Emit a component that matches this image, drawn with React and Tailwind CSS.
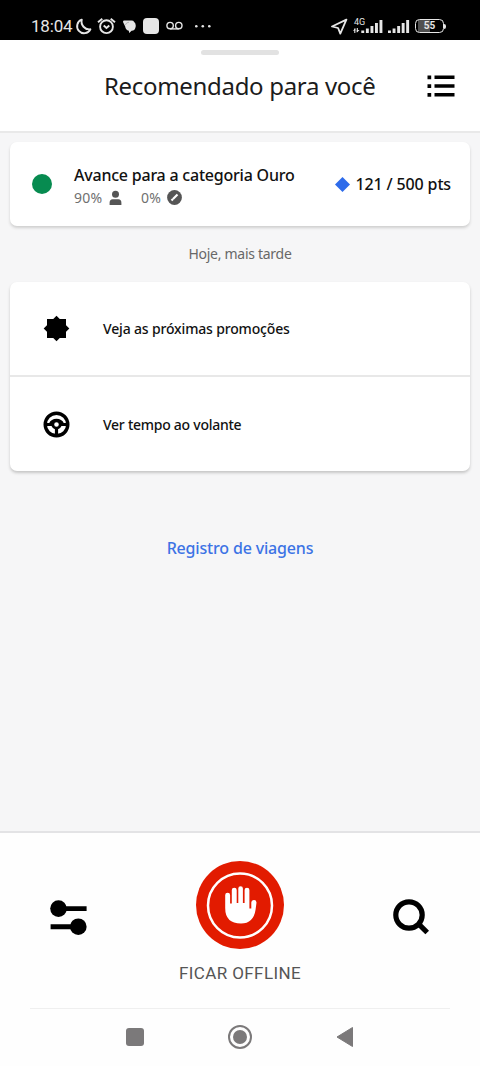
import React from "react";

function StatusBar() {
  return (
    <header className="flex h-[40px] shrink-0 items-start justify-between bg-black pl-[31px] pr-[34px] pt-[14px] text-[#e6e6e6]">
      <div className="flex h-6 items-center">
        <span className="w-[44px] whitespace-nowrap font-['Roboto',sans-serif] text-[17px] leading-6 tracking-[-0.2px]">18:04</span>
        <svg className="h-6 w-[17px]" viewBox="75 14 17 24" fill="none" stroke="currentColor" strokeWidth="1.9" strokeLinejoin="round">
          <path d="M81.8 19.6 A7 7 0 1 0 90.4 29.3 A7.8 7.8 0 0 1 81.8 19.6Z" />
        </svg>
        <svg className="ml-[5px] h-6 w-[19px]" viewBox="97 14 19 24" fill="none" stroke="currentColor" strokeWidth="1.9">
          <circle cx="106.500" cy="26.700" r="6.400" />
          <path d="M98 22.300 L102.300 18.700 M115 22.300 L110.700 18.700" />
          <path d="M103.700 25.500 L106.500 28 L109.300 25.500" />
        </svg>
        <svg className="ml-[7px] h-6 w-[14px]" viewBox="123 14 14 24" fill="currentColor">
          <path d="M124.200 20.600H131.500Q133.500 20.600 134.200 22Q136 23.300 135.700 26.400Q135.200 30.500 131.600 30.700L129.200 33L128.800 30.700Q125.500 30.200 125.200 26.600L123 22Q122.900 20.600 124.200 20.600Z" />
          <path d="M125.300 25Q126.200 22.300 129 22.200" stroke="#888" strokeWidth=".5" fill="none" />
        </svg>
        <span className="ml-[6px] size-4 rounded-[4px] bg-current" />
        <svg className="ml-[7px] h-6 w-[17px]" viewBox="165.500 14 17 24" fill="none" stroke="currentColor" strokeWidth="1.400">
          <circle cx="169.600" cy="25.600" r="3.200" />
          <circle cx="178.300" cy="25.600" r="3.200" />
          <path d="M169.600 28.900 H178.300" />
        </svg>
        <svg className="ml-[11px] h-6 w-[18px]" viewBox="193.500 14 18 24" fill="currentColor">
          <circle cx="195.800" cy="26.300" r="1.300" />
          <circle cx="202.300" cy="26.300" r="1.300" />
          <circle cx="208.800" cy="26.300" r="1.300" />
        </svg>
      </div>
      <div className="flex h-6 items-center">
        <svg className="h-6 w-[17px]" viewBox="331 14 17 24" fill="none" stroke="currentColor" strokeWidth="1.800" strokeLinejoin="round">
          <path d="M346.400 19.600 L332 26.500 L338.100 28 L340.300 33.600Z" />
        </svg>
        <div className="relative ml-[5px] h-6 w-[31px]">
          <span className="absolute left-[1px] top-[3px] font-['Roboto',sans-serif] text-[9px] leading-[10px]">4G</span>
          <svg className="h-6 w-[31px]" viewBox="353.500 14 31 24" fill="currentColor">
            <path d="M355.300 28.500V33M357.800 28V32" stroke="currentColor" strokeWidth="1.100" />
            <path d="M353.500 30.700L355.800 28.200V30.700ZM357.300 30H360L357.300 32.700Z" />
            <rect x="361.800" y="30.500" width="2.900" height="2.500" />
            <rect x="366.400" y="28.500" width="2.900" height="4.500" />
            <rect x="371" y="26" width="2.900" height="7" />
            <rect x="375.500" y="23" width="2.900" height="10" />
            <rect x="380" y="20" width="2.900" height="13" />
          </svg>
        </div>
        <svg className="ml-[4px] h-6 w-[22px]" viewBox="388.500 14 22 24" fill="currentColor">
          <rect x="388.500" y="30.500" width="2.900" height="2.500" />
          <rect x="393.100" y="28.500" width="2.900" height="4.500" />
          <rect x="397.700" y="26" width="2.900" height="7" />
          <rect x="402.200" y="23" width="2.900" height="10" />
          <rect x="406.700" y="20" width="2.900" height="13" />
        </svg>
        <div className="ml-[5px] flex items-center">
          <div className="flex h-[14px] w-[29px] items-center justify-center rounded-[4.500px] border-[1.500px] border-current bg-[linear-gradient(90deg,#000_2px,#505050_2px,#505050_14px,#000_14px)] font-['Roboto',sans-serif] text-[10px] font-bold leading-none">55</div>
          <span className="h-[5px] w-[2px] rounded-r-sm bg-current" />
        </div>
      </div>
    </header>
  );
}

function Heading() {
  return (
    <section className="flex h-[93px] shrink-0 flex-col border-b-2 border-[#e9e9e9] bg-white">
      <div className="mx-auto mt-[10px] h-[5px] w-[78px] rounded-full bg-[#e2e2e2]" />
      <div className="flex h-[61px] items-center pl-[104px] pr-[25px]">
        <h1 className="w-[300px] whitespace-nowrap font-['Noto_Sans',sans-serif] text-[24px] font-normal leading-8 tracking-[-0.32px] text-[#1c1c1c]">Recomendado para você</h1>
        <svg className="ml-auto h-[22px] w-[28px]" viewBox="427 74 28 22" fill="#000">
          <path d="M427.500 74.500h3.700v3.700h-3.700zM427.500 83.200h3.700v3.700h-3.700zM427.500 92h3.700v3.700h-3.700zM434.500 74.500h20v3.500h-20zM434.500 83.300h20v3.500h-20zM434.500 92.100h20v3.500h-20z" />
        </svg>
      </div>
    </section>
  );
}

function TierCard() {
  return (
    <article className="flex h-[84px] items-center rounded-[7px] bg-white pl-[22px] pr-[19px] shadow-[0_2px_3px_#cfcfcf]">
      <span className="size-[20px] rounded-full bg-[#078b50]" />
      <div className="ml-[22px] flex flex-col pt-[4px]">
        <h2 className="whitespace-nowrap text-[16px] font-medium leading-6 tracking-[-0.22px] text-[#111]">Avance para a categoria Ouro</h2>
        <div className="-mt-px flex h-6 items-center text-[14px] text-[#707070]">
          <span className="w-[35px] tracking-[0.3px]">90%</span>
          <svg className="h-[16px] w-[13px]" viewBox="109 190 13 16" fill="#555">
            <circle cx="115.500" cy="194.300" r="3.500" />
            <path d="M109.600 205V203Q109.600 199.300 112.700 199.300H118.300Q121.400 199.300 121.400 203V205Z" />
          </svg>
          <span className="ml-[19px] w-[26px] tracking-[0.3px]">0%</span>
          <svg className="size-[15px]" viewBox="0 0 15 15">
            <circle cx="7.500" cy="7.500" r="7.400" fill="#555" />
            <path d="M4.500 10.500L10.500 4.500" stroke="#fff" strokeWidth="2.200" />
            <path d="M5.500 8.500L6.500 9.500" stroke="#777" strokeWidth=".6" />
          </svg>
        </div>
      </div>
      <div className="ml-auto flex items-center">
        <svg className="mr-[6px] size-[15px]" viewBox="0 0 15 15"><path d="M7.500 0L15 7.500L7.500 15L0 7.500Z" fill="#2e6bea" /></svg>
        <span className="whitespace-nowrap text-[16px] font-medium leading-6 tracking-[-0.15px] text-[#111]">121 / 500 pts</span>
      </div>
    </article>
  );
}

function ActionList() {
  return (
    <article className="flex flex-col rounded-[7px] bg-white shadow-[0_2px_3px_#c6c6c6]">
      <button className="flex h-[95px] items-center border-b-2 border-[#e8e8e8] pl-[33px] text-left">
        <svg className="size-[27px]" viewBox="0 0 27 27" fill="#000">
          <path d="M4 4H23V23H4Z" />
          <path d="M13.500 .7L26.300 13.500L13.500 26.300L.7 13.500Z" />
        </svg>
        <span className="ml-[33px] whitespace-nowrap text-[14px] font-medium tracking-[-0.16px] text-[#111]">Veja as próximas promoções</span>
      </button>
      <button className="flex h-[94px] items-center pl-[33px] text-left">
        <svg className="size-[27px]" viewBox="0 0 27 27" fill="none" stroke="#000">
          <circle cx="13.500" cy="13.500" r="11.300" strokeWidth="3.400" />
          <circle cx="13.500" cy="13.500" r="3.700" strokeWidth="2.800" />
          <path d="M3 13.500H9.500M17.500 13.500H24M13.500 17.500V24" strokeWidth="3.200" />
          <path d="M7 13Q9 9 13.500 9Q18 9 20 13" strokeWidth="2.300" />
        </svg>
        <span className="ml-[33px] whitespace-nowrap text-[14px] font-medium tracking-[-0.26px] text-[#111]">Ver tempo ao volante</span>
      </button>
    </article>
  );
}

function OfflineButton() {
  return (
    <button className="flex flex-col items-center">
      <svg className="size-[88px]" viewBox="196 861 88 88">
        <circle cx="240" cy="905" r="44" fill="#e21b00" />
        <circle cx="240" cy="905.500" r="32" fill="none" stroke="#fff" strokeWidth="2.500" />
        <path fill="#fff" d="M225.200 895.100A2.450 2.450 0 0 1 230.100 895.100V903.500H231.800V890.100A2.450 2.450 0 0 1 236.700 890.100V903H238.300V888.600A2.300 2.300 0 0 1 242.900 888.600V903H244.600V890.100A2.400 2.400 0 0 1 249.400 890.100V908.500H251.300V902.800A2.600 2.600 0 0 1 256.500 902.400L255.600 909.500Q253.500 923.500 241 923.500Q225.200 923.500 225.200 908Z" />
      </svg>
      <span className="mt-[12px] whitespace-nowrap font-['Roboto',sans-serif] text-[17px] leading-6 tracking-[0.4px] text-[#555]">FICAR OFFLINE</span>
    </button>
  );
}

function BottomPanel() {
  return (
    <footer className="flex h-[235px] flex-col border-t-2 border-[#e3e3e5] bg-[#fefefe]">
      <div className="grid h-[175px] grid-cols-3 justify-items-center pt-[28px]">
        <svg className="mr-[23px] mt-[38px] h-[37px] w-[38px]" viewBox="50 899 38 37" fill="#000">
          <circle cx="58.500" cy="908.600" r="8.300" />
          <circle cx="78.300" cy="926.700" r="8.300" />
          <path d="M60 906.200H86.600V911H60ZM50.600 924.200H77V929.200H50.600Z" />
        </svg>
        <OfflineButton />
        <svg className="ml-[21px] mt-[38px] h-[37px] w-[38px]" viewBox="392 899 38 37" fill="none" stroke="#000" strokeWidth="5.200">
          <circle cx="409" cy="915" r="13.200" />
          <path d="M418 923.300L427.200 932.500" />
        </svg>
      </div>
      <nav className="mx-[30px] flex h-[56px] items-center justify-center gap-[83px] border-t border-[#efefef]">
        <span className="size-[18px] rounded-[3px] bg-[#7b797a]" />
        <svg className="size-[26px]" viewBox="0 0 26 26">
          <circle cx="13" cy="13" r="11" fill="none" stroke="#7b797a" strokeWidth="2" />
          <circle cx="13" cy="13" r="7" fill="#7b797a" />
        </svg>
        <svg className="h-[22px] w-[18px]" viewBox="0 0 18 22"><path d="M1 11L16.500 1.500V20.500Z" fill="#7b797a" stroke="#7b797a" strokeWidth="1" strokeLinejoin="round" /></svg>
      </nav>
    </footer>
  );
}

export default function App() {
  return (
    <div className="flex h-[1066px] w-[480px] flex-col overflow-hidden bg-[#f6f6f7] font-['Noto_Sans',sans-serif]">
      <StatusBar />
      <Heading />
      <main className="flex flex-1 flex-col px-[10px] pt-[9px]">
        <TierCard />
        <p className="flex h-[56px] items-center justify-center pb-[2px] text-[14px] tracking-[-0.28px] text-[#686868]">Hoje, mais tarde</p>
        <ActionList />
        <a href="#viagens" className="mt-[65px] self-center whitespace-nowrap text-[16px] font-medium leading-6 tracking-[-0.17px] text-[#3c73e5]">Registro de viagens</a>
      </main>
      <BottomPanel />
    </div>
  );
}
